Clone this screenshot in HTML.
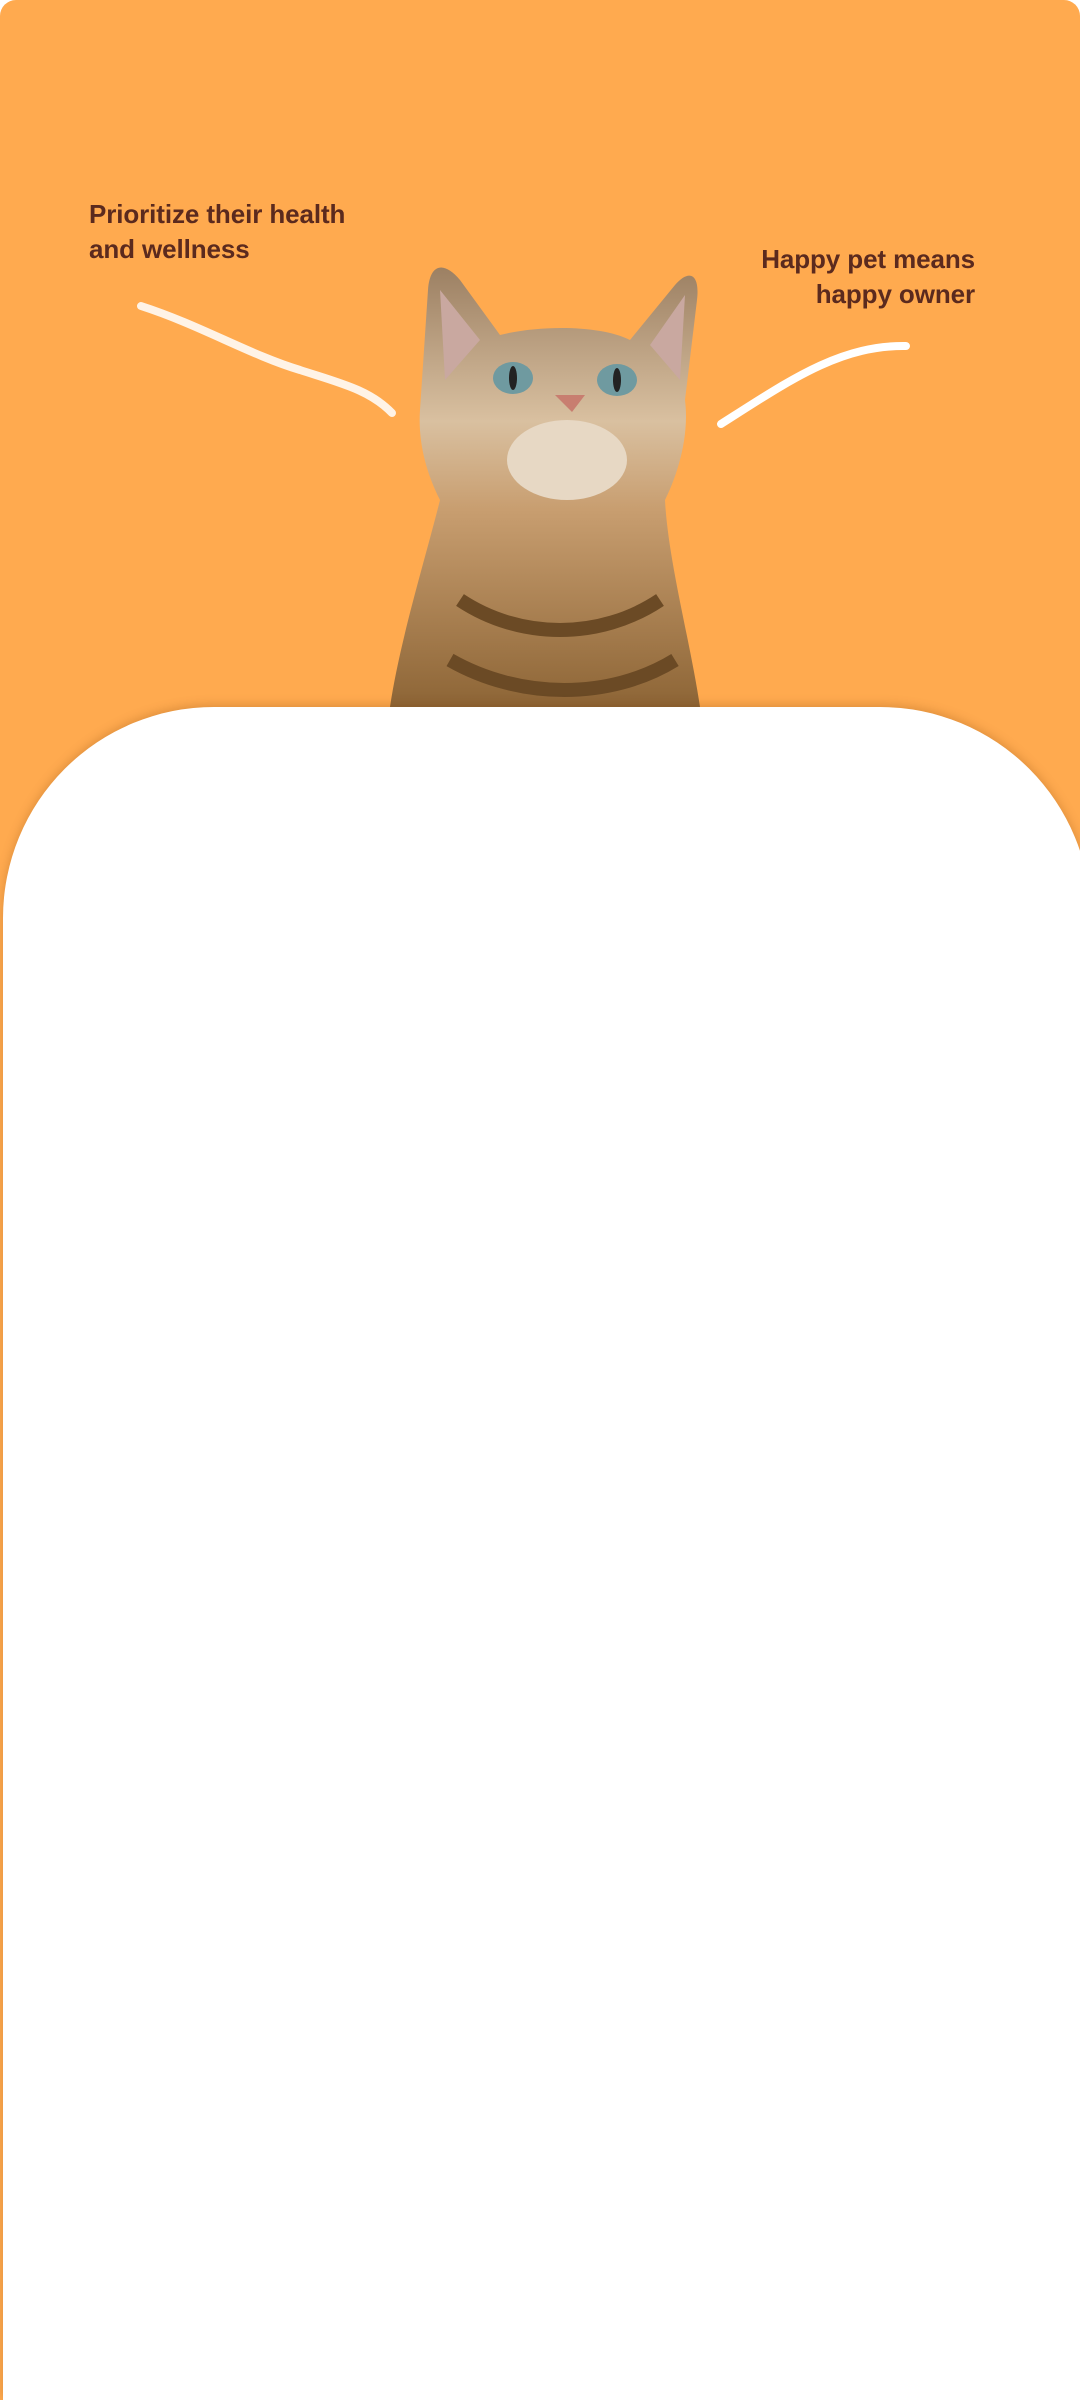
<!DOCTYPE html>
<html><head><meta charset="utf-8"><style>
html,body{margin:0;padding:0;background:#fff;overflow:hidden;width:1080px;height:2400px;}
.wrap{position:relative;width:1080px;height:2400px;overflow:hidden;background:#fff;}
.bg{position:absolute;left:0;top:0;width:1080px;height:2400px;background:#FFAA4F;border-radius:16px 16px 0 0;}
.t{position:absolute;font-family:"Liberation Sans",sans-serif;font-weight:bold;font-size:26px;line-height:35px;color:#5b2a1e;letter-spacing:-0.1px;}
.card{position:absolute;left:3px;top:707px;width:1088px;height:1693px;background:#fff;border-radius:211px 211px 0 0;box-shadow:0 -2px 10px rgba(120,60,0,0.25);}
</style></head><body><div class="wrap">
<div class="bg"></div>
<div class="t" style="left:89px;top:197px;">Prioritize their health<br>and wellness</div>
<div class="t" style="right:105px;top:242px;text-align:right;">Happy pet means<br>happy owner</div>
<svg style="position:absolute;left:0;top:0" width="1080" height="720">
<path d="M141 306 C 200 325, 250 355, 300 370 C 340 383, 370 390, 392 413" stroke="#fff3e6" stroke-width="8" fill="none" stroke-linecap="round"/>
<path d="M721 424 C 790 380, 840 345, 906 346" stroke="#fff" stroke-width="8" fill="none" stroke-linecap="round"/>
<defs>
<linearGradient id="fur" x1="0" y1="0" x2="0" y2="1">
<stop offset="0" stop-color="#9c8063"/><stop offset="0.35" stop-color="#d9c0a0"/><stop offset="0.55" stop-color="#c89e70"/><stop offset="1" stop-color="#8d6536"/></linearGradient>
</defs>
<path d="M420 410 L428 290 C430 262 445 262 460 280 L500 335 C540 325 600 325 630 340 L675 285 C690 268 700 275 697 300 L685 400 C690 440 675 480 665 500 C668 560 690 640 700 707 L390 707 C400 640 425 560 440 500 C425 470 418 440 420 410 Z" fill="url(#fur)"/>
<path d="M440 290 L480 340 L445 380 Z" fill="#c9a8a0"/>
<path d="M685 295 L650 345 L680 380 Z" fill="#c9a8a0"/>
<ellipse cx="513" cy="378" rx="20" ry="16" fill="#6f9aa0"/><ellipse cx="513" cy="378" rx="4" ry="12" fill="#222"/>
<ellipse cx="617" cy="380" rx="20" ry="16" fill="#6f9aa0"/><ellipse cx="617" cy="380" rx="4" ry="12" fill="#222"/>
<path d="M555 395 L585 395 L572 412 Z" fill="#c87e70"/>
<ellipse cx="567" cy="460" rx="60" ry="40" fill="#e7d8c4"/>
<path d="M460 600 C520 640 600 640 660 600 M450 660 C520 700 610 700 675 660" stroke="#6b4a25" stroke-width="14" fill="none"/>
</svg>
<div class="card"></div>
</div></body></html>
